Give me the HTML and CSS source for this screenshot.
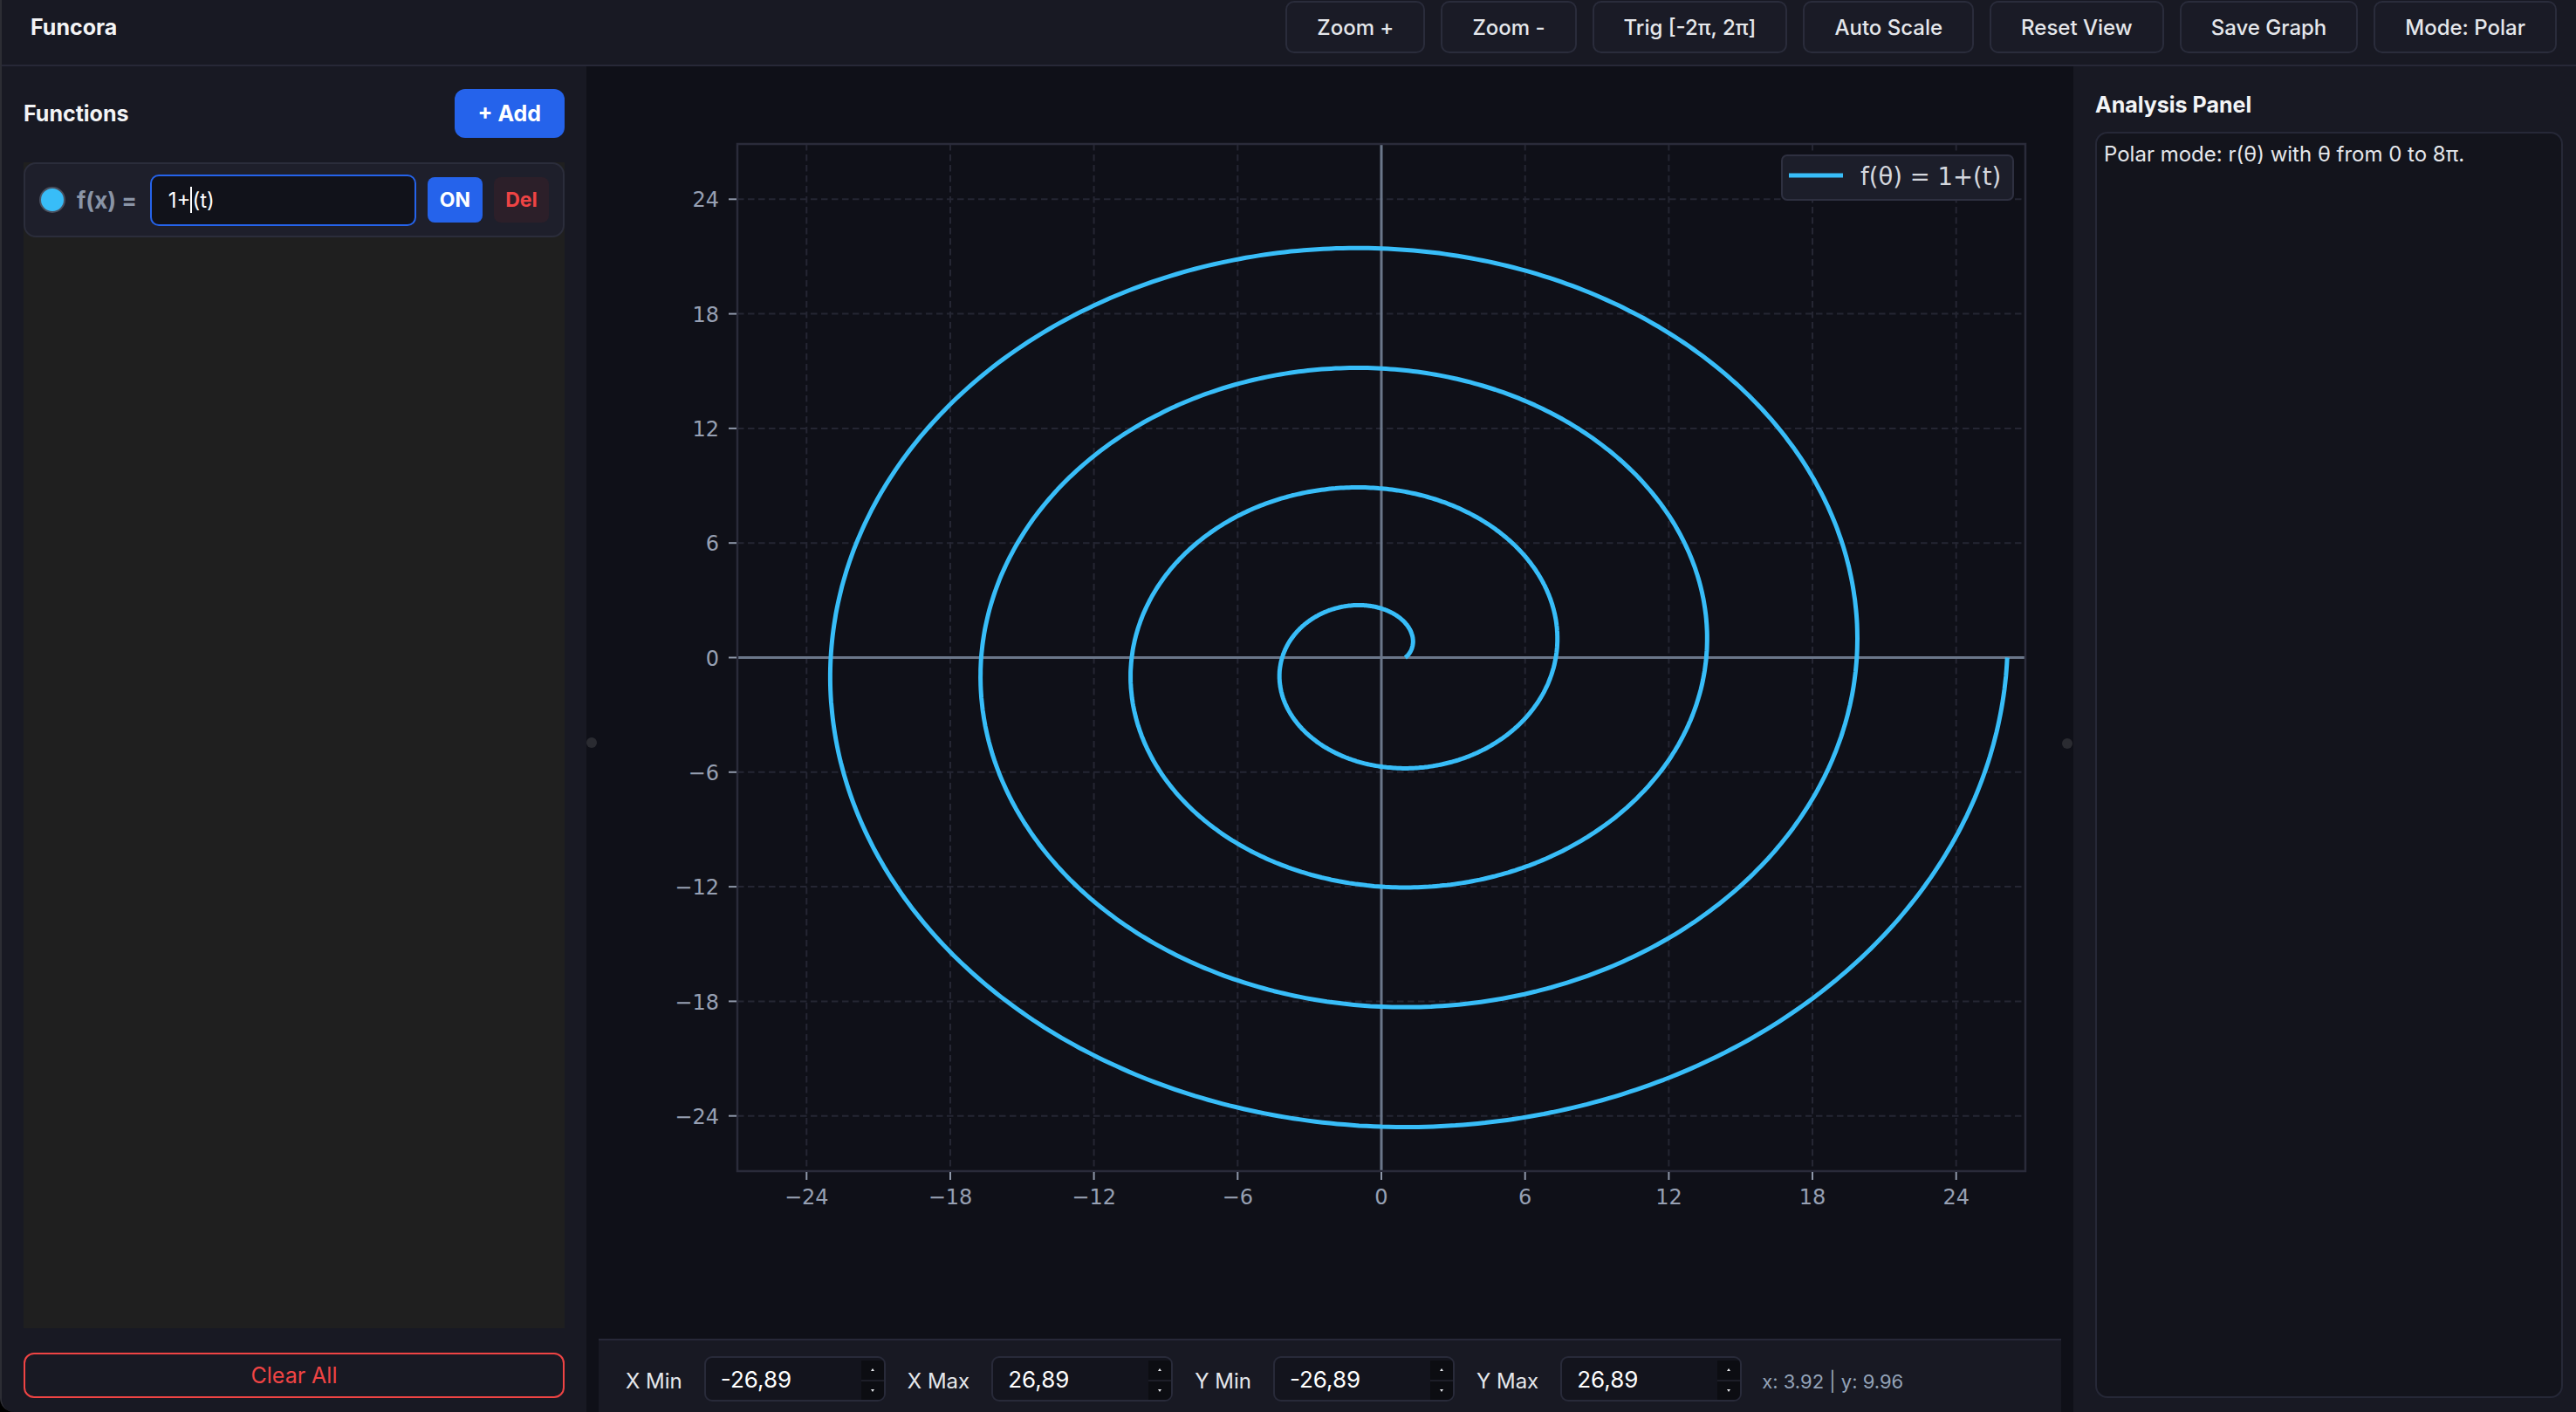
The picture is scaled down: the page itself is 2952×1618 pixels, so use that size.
FILE: index.html
```html
<!DOCTYPE html>
<html lang="en">
<head>
    <meta charset="UTF-8">
    <meta name="viewport" content="width=device-width, initial-scale=1.0">
    <title>Funcora</title>
    <link rel="stylesheet" href="styles.css">
</head>
<body>
    <div class="app">
        <header class="topbar">
            <div class="brand">Funcora</div>
            <nav class="toolbar">
                <button class="tool-btn">Zoom +</button>
                <button class="tool-btn">Zoom -</button>
                <button class="tool-btn">Trig [-2π, 2π]</button>
                <button class="tool-btn">Auto Scale</button>
                <button class="tool-btn">Reset View</button>
                <button class="tool-btn">Save Graph</button>
                <button class="tool-btn">Mode: Polar</button>
            </nav>
        </header>

        <div class="workspace">
            <aside class="sidebar">
                <div class="sidebar-head">
                    <h2 class="panel-title">Functions</h2>
                    <button class="add-btn">+ Add</button>
                </div>
                <div class="fn-list">
                    <div class="fn-row">
                        <span class="fn-swatch"></span>
                        <span class="fn-label">f(x) =</span>
                        <div class="fn-input">1+<span class="caret"></span>(t)</div>
                        <button class="fn-toggle">ON</button>
                        <button class="fn-del">Del</button>
                    </div>
                </div>
                <button class="clear-btn">Clear All</button>
            </aside>

            <main class="plot-area">
                <svg class="plot" width="1704" height="1458" viewBox="0 0 1704 1458">
                    <g class="grid">
                        <line x1="252.3" y1="89" x2="252.3" y2="1266"/>
                        <line x1="417" y1="89" x2="417" y2="1266"/>
                        <line x1="581.6" y1="89" x2="581.6" y2="1266"/>
                        <line x1="746.3" y1="89" x2="746.3" y2="1266"/>
                        <line x1="1075.7" y1="89" x2="1075.7" y2="1266"/>
                        <line x1="1240.4" y1="89" x2="1240.4" y2="1266"/>
                        <line x1="1405" y1="89" x2="1405" y2="1266"/>
                        <line x1="1569.7" y1="89" x2="1569.7" y2="1266"/>
                        <line x1="173" y1="152.3" x2="1649" y2="152.3"/>
                        <line x1="173" y1="283.6" x2="1649" y2="283.6"/>
                        <line x1="173" y1="414.9" x2="1649" y2="414.9"/>
                        <line x1="173" y1="546.2" x2="1649" y2="546.2"/>
                        <line x1="173" y1="808.8" x2="1649" y2="808.8"/>
                        <line x1="173" y1="940.1" x2="1649" y2="940.1"/>
                        <line x1="173" y1="1071.4" x2="1649" y2="1071.4"/>
                        <line x1="173" y1="1202.7" x2="1649" y2="1202.7"/>
                    </g>
                    <g class="axis">
                        <line x1="911" y1="89" x2="911" y2="1266"/>
                        <line x1="173" y1="677.5" x2="1649" y2="677.5"/>
                    </g>
                    <path id="spiral" class="curve" d=""/>
                    <rect class="frame" x="173" y="89" width="1476" height="1177"/>

                    <g class="ticks">
                        <line x1="252.3" y1="1267" x2="252.3" y2="1276"/>
                        <line x1="417" y1="1267" x2="417" y2="1276"/>
                        <line x1="581.6" y1="1267" x2="581.6" y2="1276"/>
                        <line x1="746.3" y1="1267" x2="746.3" y2="1276"/>
                        <line x1="911" y1="1267" x2="911" y2="1276"/>
                        <line x1="1075.7" y1="1267" x2="1075.7" y2="1276"/>
                        <line x1="1240.4" y1="1267" x2="1240.4" y2="1276"/>
                        <line x1="1405" y1="1267" x2="1405" y2="1276"/>
                        <line x1="1569.7" y1="1267" x2="1569.7" y2="1276"/>
                        <line x1="163" y1="152.3" x2="172" y2="152.3"/>
                        <line x1="163" y1="283.6" x2="172" y2="283.6"/>
                        <line x1="163" y1="414.9" x2="172" y2="414.9"/>
                        <line x1="163" y1="546.2" x2="172" y2="546.2"/>
                        <line x1="163" y1="677.5" x2="172" y2="677.5"/>
                        <line x1="163" y1="808.8" x2="172" y2="808.8"/>
                        <line x1="163" y1="940.1" x2="172" y2="940.1"/>
                        <line x1="163" y1="1071.4" x2="172" y2="1071.4"/>
                        <line x1="163" y1="1202.7" x2="172" y2="1202.7"/>
                    </g>
                    <g class="tick-x">
                        <text x="252.3" y="1304">−24</text>
                        <text x="417" y="1304">−18</text>
                        <text x="581.6" y="1304">−12</text>
                        <text x="746.3" y="1304">−6</text>
                        <text x="911" y="1304">0</text>
                        <text x="1075.7" y="1304">6</text>
                        <text x="1240.4" y="1304">12</text>
                        <text x="1405" y="1304">18</text>
                        <text x="1569.7" y="1304">24</text>
                    </g>
                    <g class="tick-y">
                        <text x="152" y="161">24</text>
                        <text x="152" y="292.5">18</text>
                        <text x="152" y="424">12</text>
                        <text x="152" y="555">6</text>
                        <text x="152" y="686.5">0</text>
                        <text x="152" y="818">−6</text>
                        <text x="152" y="949">−12</text>
                        <text x="152" y="1080.5">−18</text>
                        <text x="152" y="1212">−24</text>
                    </g>

                    <g class="legend">
                        <rect x="1370" y="102" width="265" height="51" rx="6"/>
                        <line x1="1378" y1="125" x2="1440" y2="125"/>
                        <text x="1460" y="136">f(θ) = 1+(t)</text>
                    </g>

                    <circle class="handle" cx="6" cy="775" r="6"/>
                    <circle class="handle" cx="1697" cy="776" r="6"/>
                </svg>

                <div class="range-bar">
                    <span class="range-label">X Min</span>
                    <div class="num-field">
                        <input class="num-input" type="text" value="-26,89">
                        <span class="spin"><i class="spin-up"></i><i class="spin-down"></i></span>
                    </div>
                    <span class="range-label">X Max</span>
                    <div class="num-field">
                        <input class="num-input" type="text" value="26,89">
                        <span class="spin"><i class="spin-up"></i><i class="spin-down"></i></span>
                    </div>
                    <span class="range-label">Y Min</span>
                    <div class="num-field">
                        <input class="num-input" type="text" value="-26,89">
                        <span class="spin"><i class="spin-up"></i><i class="spin-down"></i></span>
                    </div>
                    <span class="range-label">Y Max</span>
                    <div class="num-field">
                        <input class="num-input" type="text" value="26,89">
                        <span class="spin"><i class="spin-up"></i><i class="spin-down"></i></span>
                    </div>
                    <span class="cursor-pos">x: 3.92 | y: 9.96</span>
                </div>
            </main>

            <aside class="analysis">
                <h2 class="panel-title">Analysis Panel</h2>
                <div class="analysis-box">Polar mode: r(θ) with θ from 0 to 8π.</div>
            </aside>
        </div>
    </div>

    <script src="script.js"></script>
</body>
</html>
```

FILE: styles.css
```css
* {
    box-sizing: border-box;
}

html, body {
    margin: 0;
    padding: 0;
    height: 100%;
    background-color: #000;
}

body {
    font-family: Inter, "Noto Sans", sans-serif;
    color: #e5e7eb;
    overflow: hidden;
}

button, input {
    font-family: inherit;
}

.app {
    height: 1618px;
    display: flex;
    flex-direction: column;
    background-color: #0f1018;
    border-left: 2px solid #2c2d34;
    border-bottom-left-radius: 16px;
    overflow: hidden;
}

/* top bar */
.topbar {
    flex: none;
    height: 76px;
    display: flex;
    align-items: flex-start;
    justify-content: space-between;
    padding: 1px 22px 0 33px;
    background-color: #181923;
    border-bottom: 2px solid #272837;
}

.brand {
    font-size: 25px;
    font-weight: 700;
    line-height: 60px;
    color: #f3f4f6;
}

.toolbar {
    display: flex;
    gap: 18px;
}

.tool-btn {
    height: 60px;
    padding: 0 34px;
    background-color: #1a1b26;
    border: 2px solid #2a2c3b;
    border-radius: 10px;
    color: #e5e7eb;
    font-size: 24px;
    font-weight: 500;
}

.workspace {
    flex: 1;
    display: flex;
    min-height: 0;
}

.panel-title {
    margin: 0;
    font-size: 25px;
    font-weight: 700;
    line-height: 30px;
    color: #f3f4f6;
}

/* functions sidebar */
.sidebar {
    flex: none;
    width: 670px;
    display: flex;
    flex-direction: column;
    gap: 28px;
    padding: 26px 25px 16px 25px;
    background-color: #181923;
}

.sidebar-head {
    display: flex;
    align-items: center;
    justify-content: space-between;
}

.add-btn {
    height: 56px;
    padding: 0 27px;
    background-color: #2563eb;
    border: none;
    border-radius: 12px;
    color: #fff;
    font-size: 25px;
    font-weight: 700;
}

.fn-list {
    flex: 1;
    background-color: #1f1f1f;
}

.fn-row {
    height: 86px;
    display: flex;
    align-items: center;
    gap: 13px;
    padding: 0 16px;
    background-color: #1e1f2b;
    border: 2px solid #2b2d3b;
    border-radius: 14px;
}

.fn-swatch {
    flex: none;
    width: 30px;
    height: 30px;
    border-radius: 50%;
    background-color: #38bdf8;
    border: 2px solid #4a5160;
}

.fn-label {
    margin-right: 2px;
    font-size: 26px;
    font-weight: 700;
    color: #8a94a6;
    white-space: nowrap;
}

.fn-input {
    flex: 1;
    height: 59px;
    display: flex;
    align-items: center;
    padding-left: 19px;
    background-color: #11121a;
    border: 2px solid #2563eb;
    border-radius: 10px;
    color: #fff;
    font-size: 24px;
}

.caret {
    width: 2px;
    height: 30px;
    background-color: #fff;
}

.fn-toggle, .fn-del {
    flex: none;
    width: 63px;
    height: 52px;
    border: none;
    border-radius: 8px;
    font-size: 23px;
    font-weight: 700;
}

.fn-toggle {
    background-color: #2563eb;
    color: #fff;
}

.fn-del {
    background-color: #2c1f29;
    color: #ef4444;
}

.clear-btn {
    flex: none;
    height: 52px;
    background: transparent;
    border: 2px solid #ef4444;
    border-radius: 12px;
    color: #ef4444;
    font-size: 25px;
}

/* plot */
.plot-area {
    flex: none;
    width: 1704px;
    display: flex;
    flex-direction: column;
    background-color: #0f1018;
}

.plot {
    display: block;
    flex: none;
}

.grid line {
    stroke: #252633;
    stroke-width: 2;
    stroke-dasharray: 7.5 4.5;
}

.axis line {
    stroke: #6b778a;
    stroke-width: 3;
}

.curve {
    fill: none;
    stroke: #38bdf8;
    stroke-width: 5;
    stroke-linejoin: round;
}

.frame {
    fill: none;
    stroke: #2a2b3a;
    stroke-width: 2.5;
}

.ticks line {
    stroke: #8e97a9;
    stroke-width: 2;
}

.tick-x text, .tick-y text {
    font-family: "DejaVu Sans", sans-serif;
    font-size: 24px;
    fill: #97a0b3;
}

.tick-x text {
    text-anchor: middle;
}

.tick-y text {
    text-anchor: end;
}

.legend rect {
    fill: #1c1e2a;
    stroke: #2e3040;
    stroke-width: 2;
}

.legend line {
    stroke: #38bdf8;
    stroke-width: 5;
}

.legend text {
    font-family: "DejaVu Sans", sans-serif;
    font-size: 27.5px;
    fill: #d4d7de;
}

.handle {
    fill: #2a2b31;
}

/* range inputs */
.range-bar {
    flex: 1;
    display: flex;
    align-items: center;
    gap: 25px;
    margin: 0 14px;
    padding: 6px 0 0 31px;
    background-color: #181923;
    border-top: 2px solid #272838;
}

.range-label {
    font-size: 24px;
    color: #e5e7eb;
    padding-top: 5px;
}

.num-field {
    position: relative;
    width: 208px;
    height: 52px;
    background-color: #13141d;
    border: 2px solid #282a39;
    border-radius: 9px;
    overflow: hidden;
}

.num-input {
    width: 100%;
    height: 100%;
    padding: 0 0 0 17px;
    background: transparent;
    border: none;
    outline: none;
    color: #fff;
    font-size: 26px;
}

.spin {
    position: absolute;
    top: 3px;
    right: 0;
    bottom: 0;
    width: 26px;
    display: flex;
    flex-direction: column;
    gap: 2px;
    background-color: #1d1e28;
}

.spin i {
    flex: 1;
    display: flex;
    align-items: center;
    justify-content: center;
    background-color: #0c0d12;
}

.spin-up::after, .spin-down::after {
    content: "";
    border-left: 2px solid transparent;
    border-right: 2px solid transparent;
}

.spin-up::after {
    border-bottom: 3px solid #e5e7eb;
}

.spin-down::after {
    border-top: 3px solid #e5e7eb;
}

.cursor-pos {
    margin-left: -2px;
    padding-top: 5px;
    font-size: 22px;
    color: #94a3b8;
}

/* analysis panel */
.analysis {
    flex: 1;
    display: flex;
    flex-direction: column;
    gap: 16px;
    padding: 29px 15px 16px 25px;
    background-color: #181923;
}

.analysis-box {
    flex: 1;
    padding: 8px 8px;
    background-color: #13141c;
    border: 2px solid #262837;
    border-radius: 14px;
    font-size: 24px;
    line-height: 32px;
    color: #e5e7eb;
}
```

FILE: script.js
```js
// r = 1 + t, t from 0 to 8π, drawn in plot pixel space
const spiral = document.getElementById('spiral');
const cx = 911, cy = 677.5;
const sx = 27.445, sy = 21.886;
const steps = 2000;

let d = '';
for (let i = 0; i <= steps; i++) {
    const t = i / steps * 8 * Math.PI;
    const r = 1 + t;
    const x = cx + r * Math.cos(t) * sx;
    const y = cy - r * Math.sin(t) * sy;
    d += (i === 0 ? 'M' : 'L') + x.toFixed(1) + ' ' + y.toFixed(1);
}
spiral.setAttribute('d', d);
```
